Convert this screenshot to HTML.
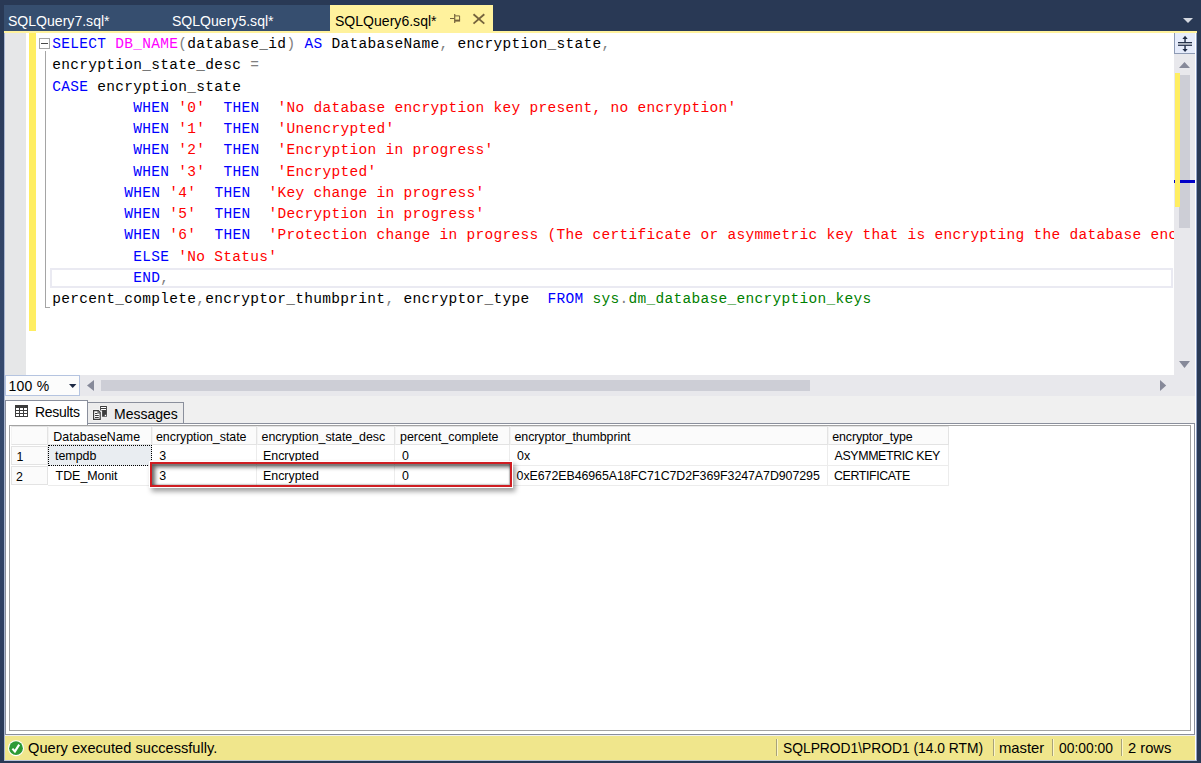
<!DOCTYPE html>
<html lang="en">
<head>
<meta charset="utf-8">
<title>SQLQuery6.sql - SQL Server Management Studio</title>
<style>
*{box-sizing:border-box;margin:0;padding:0}
html,body{width:1201px;height:763px;overflow:hidden;background:#293955}
body{position:relative;font-family:"Liberation Sans",sans-serif;color:#000}
.abs{position:absolute}
svg{position:absolute;overflow:visible}
/* ---------- frame ---------- */
#frameedge{left:4px;top:33px;width:1193px;height:728px;background:#fff;border-left:1px solid #a9b6d0;border-right:1px solid #8fa0c4;border-bottom:1px solid #b9c4dc}
#leftstrip{left:0;top:0;width:4px;height:763px;background:linear-gradient(180deg,#293955 0,#293955 30px,#2f4062 175px,#334668 265px,#35496d 365px,#34486b 465px,#2e3f62 625px,#2a3a58 740px,#293955 763px)}
/* ---------- tab strip ---------- */
#tabbar{left:4px;top:5px;width:326px;height:26px;background:#364e6f}
#tabactive{left:330px;top:5px;width:163px;height:27px;background:#fff29d}
.tabtxt{top:11px;height:20px;line-height:20px;font-size:15px;white-space:nowrap;transform-origin:0 50%;transform:scaleX(.937)}
#yline{left:4px;top:31px;width:1193px;height:2px;background:#fff29d}
/* ---------- editor ---------- */
#editor{left:5px;top:33px;width:1169px;height:342px;background:#fff;overflow:hidden}
#margin{left:0;top:0;width:21px;height:342px;background:#e6e7e8}
#chg{left:24.4px;top:0;width:6.3px;height:298px;background:#ffee62}
#code{left:47.3px;top:1px;font-family:"Liberation Mono",monospace;font-size:14.5px;letter-spacing:0.3px;line-height:21.25px;white-space:pre}
.k{color:#0000ff}.f{color:#ff00ff}.g{color:#808080}.s{color:#ff0000}.o{color:#008000}
#curline{left:45px;top:234.5px;width:1123px;height:20px;border:2px solid #eaeaf2}
#obox{left:34px;top:5px;width:11px;height:11px;border:1px solid #a5a5a5;background:#fff}
#obox i{position:absolute;left:1.4px;top:3.9px;width:6.4px;height:1.3px;background:#4a4a4a}
#oline{left:40px;top:18px;width:1px;height:257px;background:#a5a5a5}
#ohook{left:40px;top:274px;width:5px;height:1px;background:#a5a5a5}
/* ---------- scrollbars ---------- */
#vs{left:1174px;top:33px;width:21px;height:342px;background:#e8e8ec}
#split{left:1174px;top:33px;width:21px;height:21px;background:#e6ecfb;border-left:1px solid #8e9bb5;border-bottom:1px solid #8e9bb5}
#vchg{left:1175px;top:73px;width:5px;height:134px;background:#ffee62}
#vthumb{left:1179px;top:75px;width:11px;height:153px;background:#cdced6}
#vmark{left:1174px;top:180px;width:21px;height:3px;background:#0000c8}
#hs{left:5px;top:375px;width:1190px;height:21px;background:#e8e8ec}
#hthumb{left:101px;top:380px;width:709px;height:11px;background:#cdced6}
#zoom{left:5px;top:375px;width:75px;height:21px;background:#fcfcfc;border:1px solid #b5c4e0;font-size:14px;line-height:21px;padding-left:2.4px;letter-spacing:.25px;white-space:nowrap}
#gap{left:5px;top:396px;width:1190px;height:340px;background:#f0f0f0}
/* ---------- results ---------- */
#respane{left:5px;top:423px;width:1190px;height:312px;background:#fff;border:1px solid #8a8f9c}
#resinner{left:9px;top:425px;width:1182px;height:306px;background:#fff;border:1px solid #a3a3a3}
#tabres{left:5px;top:400px;width:83px;height:25px;background:#fff;border:1px solid #8a8f9c;border-bottom:none;font-size:13px}
#tabmsg{left:87px;top:402px;width:97px;height:22px;background:#ececec;border:1px solid #8a8f9c;border-left:none;font-size:13px}
.rt{position:absolute;white-space:nowrap;line-height:16px}
/* grid */
.hc{position:absolute;top:426px;height:19px;padding-top:1px;background:#fbfbfb;border:1px solid #e3e3e3;border-left-color:#f3f3f3;font-size:12.4px;line-height:18px;white-space:nowrap;overflow:hidden}
.rh{position:absolute;left:11px;width:37px;height:19px;background:#fbfbfb;border:1px solid #e3e3e3;font-size:12.4px}
.c{position:absolute;font-size:12.4px;line-height:16px;white-space:nowrap}
.vl{position:absolute;top:445px;width:1px;height:40px;background:#ececec}
.hl{position:absolute;left:48px;width:901px;height:1px;background:#ececec}
#selcell{left:48px;top:445px;width:104px;height:21px;background:#e9edf1;border:1px dotted #000}
#redbox{left:149.8px;top:462.2px;width:362px;height:24.6px;border:2.6px solid #cf1d22;outline:1.7px solid #fff;box-shadow:2px 3px 5px 1.5px rgba(0,0,0,.38),inset 3px 3px 4px rgba(0,0,0,.62),inset -1px -1px 1.5px rgba(0,0,0,.2)}
/* ---------- status bar ---------- */
#status{left:5px;top:736px;width:1190px;height:24px;background:#f0e68c;font-size:15px}
.st{position:absolute;top:2px;line-height:20px;white-space:nowrap;transform-origin:0 50%}
.sep{position:absolute;top:3px;width:1px;height:17px;background:#a8a27a;border-right:1px solid #fbf6c8;box-sizing:content-box}
</style>
</head>
<body>
<div id="leftstrip" class="abs"></div>
<div id="frameedge" class="abs"></div>
<div id="tabbar" class="abs"></div>
<div id="tabactive" class="abs"></div>
<div class="abs tabtxt" style="left:8.4px;color:#fff">SQLQuery7.sql*</div>
<div class="abs tabtxt" style="left:171.5px;color:#fff">SQLQuery5.sql*</div>
<div class="abs tabtxt" style="left:334.6px;color:#000">SQLQuery6.sql*</div>
<svg style="left:449px;top:13px" width="14" height="12" viewBox="0 0 14 12"><g fill="none" stroke="#75633d"><path d="M1 5.5H5.5" stroke-width="1"/><path d="M5.7 1V10" stroke-width="1.2"/><path d="M6 2.9H10.6V7" stroke-width="1"/><path d="M6 7.6H11.1" stroke-width="2"/></g></svg>
<svg style="left:472px;top:13px" width="14" height="12" viewBox="0 0 14 12"><path d="M1.5 1.2L12.3 10.6M12.3 1.2L1.5 10.6" stroke="#75633d" stroke-width="1.85" fill="none"/></svg>
<svg style="left:1183px;top:18px" width="10" height="5" viewBox="0 0 10 5"><path d="M0 0H10L5 5Z" fill="#d4d8e0"/></svg>
<div id="yline" class="abs"></div>

<div id="editor" class="abs">
  <div id="margin" class="abs"></div>
  <div id="chg" class="abs"></div>
  <div id="curline" class="abs"></div>
  <div id="oline" class="abs"></div>
  <div id="ohook" class="abs"></div>
  <div id="obox" class="abs"><i></i></div>
<pre id="code" class="abs"><span class="k">SELECT</span> <span class="f">DB_NAME</span><span class="g">(</span>database_id<span class="g">)</span> <span class="k">AS</span> DatabaseName<span class="g">,</span> encryption_state<span class="g">,</span>
encryption_state_desc <span class="g">=</span>
<span class="k">CASE</span> encryption_state
         <span class="k">WHEN</span> <span class="s">'0'</span>  <span class="k">THEN</span>  <span class="s">'No database encryption key present, no encryption'</span>
         <span class="k">WHEN</span> <span class="s">'1'</span>  <span class="k">THEN</span>  <span class="s">'Unencrypted'</span>
         <span class="k">WHEN</span> <span class="s">'2'</span>  <span class="k">THEN</span>  <span class="s">'Encryption in progress'</span>
         <span class="k">WHEN</span> <span class="s">'3'</span>  <span class="k">THEN</span>  <span class="s">'Encrypted'</span>
        <span class="k">WHEN</span> <span class="s">'4'</span>  <span class="k">THEN</span>  <span class="s">'Key change in progress'</span>
        <span class="k">WHEN</span> <span class="s">'5'</span>  <span class="k">THEN</span>  <span class="s">'Decryption in progress'</span>
        <span class="k">WHEN</span> <span class="s">'6'</span>  <span class="k">THEN</span>  <span class="s">'Protection change in progress (The certificate or asymmetric key that is encrypting the database encryption key is being changed.)'</span>
         <span class="k">ELSE</span> <span class="s">'No Status'</span>
         <span class="k">END</span><span class="g">,</span>
percent_complete<span class="g">,</span>encryptor_thumbprint<span class="g">,</span> encryptor_type  <span class="k">FROM</span> <span class="o">sys</span><span class="g">.</span><span class="o">dm_database_encryption_keys</span></pre>
</div>

<!-- vertical scrollbar -->
<div id="vs" class="abs"></div>
<div id="split" class="abs"></div>
<svg style="left:1177px;top:36px" width="16" height="16" viewBox="0 0 16 16"><path d="M8.05 2V14" stroke="#2a3650" stroke-width="1.5" fill="none"/><path d="M8.05 -.2L5.4 2.9H10.7ZM8.05 16.1L5.4 12.9H10.7Z" fill="#1e2a45"/><rect x="1" y="6.5" width="14" height="3" fill="#b4bac6"/><path d="M1 6.55H15M1 9.35H15" stroke="#1e2a45" stroke-width="1"/></svg>
<svg style="left:1179px;top:62px" width="11" height="6" viewBox="0 0 11 6"><path d="M0 6L5.5 0L11 6Z" fill="#868999"/></svg>
<div id="vthumb" class="abs"></div>
<div id="vmark" class="abs"></div>
<div id="vchg" class="abs"></div>
<svg style="left:1179px;top:361px" width="11" height="7" viewBox="0 0 11 7"><path d="M0 0H11L5.5 7Z" fill="#868999"/></svg>

<!-- horizontal scrollbar + zoom -->
<div id="hs" class="abs"></div>
<div id="hthumb" class="abs"></div>
<svg style="left:87px;top:380px" width="7" height="11" viewBox="0 0 7 11"><path d="M7 0V11L0 5.5Z" fill="#868999"/></svg>
<svg style="left:1160px;top:380px" width="7" height="11" viewBox="0 0 7 11"><path d="M0 0V11L6.2 5.5Z" fill="#868999"/></svg>
<div id="zoom" class="abs">100 %</div>
<svg style="left:69px;top:384px" width="8" height="4" viewBox="0 0 8 4"><path d="M0 0H7.4L3.7 4Z" fill="#1e2a45"/></svg>

<div id="gap" class="abs"></div>
<div id="respane" class="abs"></div>
<div id="resinner" class="abs"></div>

<!-- result tabs -->
<div id="tabmsg" class="abs"><span class="rt" style="left:27px;top:2.7px;font-size:14px">Messages</span></div>
<div id="tabres" class="abs"><span class="rt" style="left:29px;top:2.7px;font-size:14px;letter-spacing:-.3px">Results</span></div>
<svg style="left:15px;top:405px" width="13" height="12" viewBox="0 0 13 12"><rect x="0" y="0" width="13" height="12" fill="#3c3c3c"/><g fill="#fff"><rect x="1" y="3" width="3" height="2"/><rect x="5" y="3" width="3" height="2"/><rect x="9" y="3" width="3" height="2"/><rect x="1" y="6" width="3" height="2"/><rect x="5" y="6" width="3" height="2"/><rect x="9" y="6" width="3" height="2"/><rect x="1" y="9" width="3" height="2"/><rect x="5" y="9" width="3" height="2"/><rect x="9" y="9" width="3" height="2"/></g></svg>
<svg style="left:93px;top:406px" width="15" height="15" viewBox="0 0 15 15"><path d="M7.1 0H13.9V10.7H9.1V4.4H7.1Z" fill="#3c3c3c" stroke="#f8f8f8" stroke-width=".8" paint-order="stroke"/><path d="M8 1.5H13M8 3.5H13" stroke="#fff" stroke-width="1"/><rect x="11.8" y="8.8" width="1.3" height="1.3" fill="#fff"/><path d="M.6 4.7H5.4L7.2 6.5V13.3H.6Z" fill="#fff" stroke="#f8f8f8" stroke-width="2.2"/><path d="M.6 4.7H5.4L7.2 6.5V13.3H.6Z" fill="#fff" stroke="#3c3c3c" stroke-width="1.2"/><path d="M5 4.7V7H7.2" fill="none" stroke="#3c3c3c" stroke-width=".9"/><path d="M2 7.5H4.6M2 9.5H5.8M2 11.5H5.8" stroke="#3c3c3c" stroke-width="1"/></svg>

<!-- grid -->
<div class="hc" style="left:11px;width:37px"></div>
<div class="hc" style="left:48px;width:104px;padding-left:4.2px;letter-spacing:.08px">DatabaseName</div>
<div class="hc" style="left:152px;width:105px;padding-left:3px;letter-spacing:-.03px">encryption_state</div>
<div class="hc" style="left:257px;width:138px;padding-left:3.6px;letter-spacing:-.02px">encryption_state_desc</div>
<div class="hc" style="left:395px;width:115px;padding-left:4px">percent_complete</div>
<div class="hc" style="left:510px;width:318px;padding-left:3.5px;letter-spacing:-.06px">encryptor_thumbprint</div>
<div class="hc" style="left:828px;width:121px;padding-left:3.3px;letter-spacing:-.12px">encryptor_type</div>
<div class="rh" style="top:446px"></div>
<div class="rh" style="top:466px"></div>
<div class="hl" style="top:465px"></div>
<div class="hl" style="top:485px"></div>
<div class="vl" style="left:151px"></div>
<div class="vl" style="left:256px"></div>
<div class="vl" style="left:394px"></div>
<div class="vl" style="left:509px"></div>
<div class="vl" style="left:827px"></div>
<div class="vl" style="left:948px"></div>
<div id="selcell" class="abs"></div>
<span class="c" style="left:16.5px;top:449px">1</span>
<span class="c" style="left:16px;top:468.6px">2</span>
<span class="c" style="left:55px;top:448px">tempdb</span>
<span class="c" style="left:55.6px;top:468px">TDE_Monit</span>
<span class="c" style="left:159.3px;top:448px">3</span>
<span class="c" style="left:159.3px;top:468px">3</span>
<span class="c" style="left:263px;top:448px">Encrypted</span>
<span class="c" style="left:263px;top:468px">Encrypted</span>
<span class="c" style="left:402px;top:448px">0</span>
<span class="c" style="left:402px;top:468px">0</span>
<span class="c" style="left:517px;top:448px">0x</span>
<span class="c" style="left:516.6px;top:468px;letter-spacing:-.065px">0xE672EB46965A18FC71C7D2F369F3247A7D907295</span>
<span class="c" style="left:834.6px;top:448px;letter-spacing:-.39px">ASYMMETRIC KEY</span>
<span class="c" style="left:834px;top:468px;letter-spacing:-.38px">CERTIFICATE</span>
<div id="redbox" class="abs"></div>

<!-- status bar -->
<div id="status" class="abs">
  <svg style="left:3px;top:4px" width="16" height="16" viewBox="0 0 16 16"><circle cx="8" cy="8.2" r="8" fill="#fff"/><circle cx="8" cy="8.2" r="6.9" fill="#2d9a35"/><path d="M4.4 8.6L6.9 11.4L11.2 4.6" stroke="#fff" stroke-width="2.1" fill="none"/></svg>
  <span class="st" style="left:23.4px;transform:scaleX(.976)">Query executed successfully.</span>
  <i class="sep" style="left:771px"></i>
  <span class="st" style="left:778px;transform:scaleX(.921)">SQLPROD1\PROD1 (14.0 RTM)</span>
  <i class="sep" style="left:988px"></i>
  <span class="st" style="left:993.6px;transform:scaleX(.988)">master</span>
  <i class="sep" style="left:1047px"></i>
  <span class="st" style="left:1054px;transform:scaleX(.923)">00:00:00</span>
  <i class="sep" style="left:1116px"></i>
  <span class="st" style="left:1123px;transform:scaleX(.98)">2 rows</span>
</div>
</body>
</html>
